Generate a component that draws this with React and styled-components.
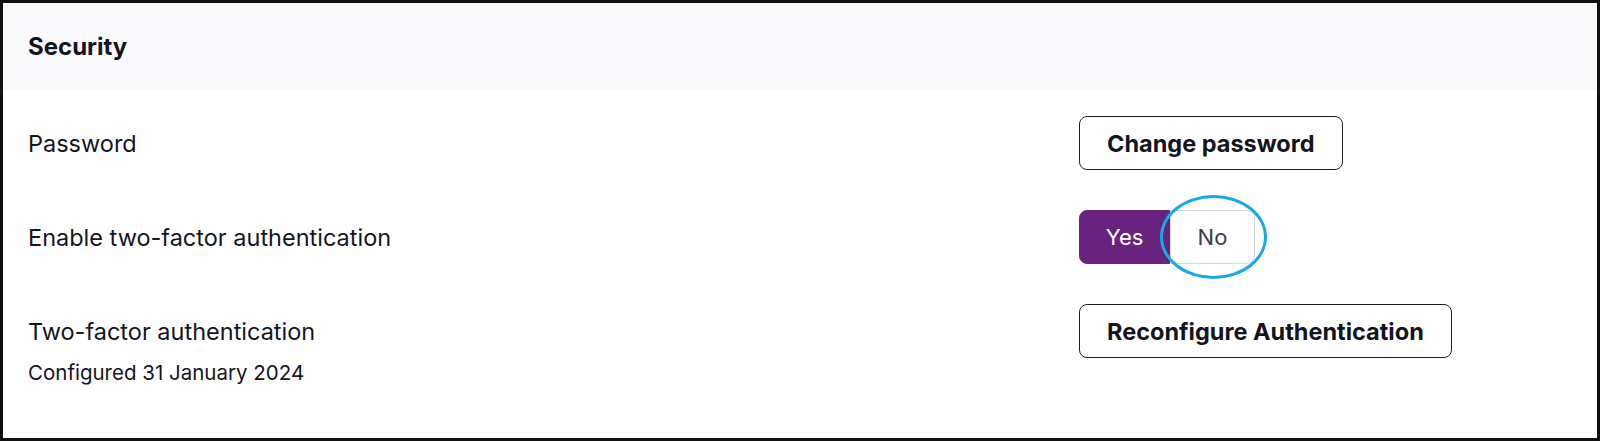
import React, { useState } from "react";
import styled, { createGlobalStyle } from "styled-components";

const Global = createGlobalStyle`
  html, body {
    margin: 0;
    padding: 0;
    background: #fff;
  }
  body {
    font-family: "Inter", "Liberation Sans", sans-serif;
    color: #14141f;
  }
`;

const Panel = styled.section`
  box-sizing: border-box;
  width: 1600px;
  height: 441px;
  border: 3px solid #111;
  background: #fff;
`;

const Header = styled.header`
  height: 87px;
  display: flex;
  align-items: center;
  padding-left: 25px;
  background: #f9f9fb;
`;

const Title = styled.h2`
  margin: 0;
  font-size: 24px;
  font-weight: 700;
`;

const Rows = styled.div`
  display: grid;
  grid-template-columns: 1051px 1fr;
  row-gap: 40px;
  padding: 26px 0 0 25px;
`;

const Label = styled.div`
  display: flex;
  flex-direction: column;
`;

const LabelText = styled.span`
  height: 54px;
  display: flex;
  align-items: center;
  font-size: 23.5px;
`;

const SubText = styled.span`
  margin-top: 3px;
  font-size: 20.5px;
  line-height: 24px;
`;

const Control = styled.div`
  display: flex;
  align-items: flex-start;
`;

const OutlineButton = styled.button`
  box-sizing: border-box;
  height: 54px;
  padding: 0 27px;
  border: 1px solid #1e1e2a;
  border-radius: 8px;
  background: #fff;
  font-family: inherit;
  font-size: 23.5px;
  font-weight: 700;
  color: #14141f;
  cursor: pointer;
`;

const Toggle = styled.div`
  position: relative;
  display: flex;
  height: 54px;
`;

const ToggleOption = styled.button`
  box-sizing: border-box;
  width: ${(p) => p.$w}px;
  height: 54px;
  padding: 0;
  font-family: inherit;
  font-size: 22px;
  cursor: pointer;
  border: 1px solid ${(p) => (p.$active ? "#68237f" : "#d3d6dd")};
  background: ${(p) => (p.$active ? "#68237f" : "#fff")};
  color: ${(p) => (p.$active ? "#fff" : "#3a3d47")};
  border-radius: ${(p) => (p.$first ? "8px 0 0 8px" : "0 8px 8px 0")};
`;

const Highlight = styled.div`
  position: absolute;
  left: 81px;
  top: -15px;
  width: 107px;
  height: 84px;
  box-sizing: border-box;
  border: 3px solid #17abe6;
  border-radius: 50%;
  pointer-events: none;
`;

export default function App() {
  const [twoFactor, setTwoFactor] = useState(true);

  return (
    <>
      <Global />
      <Panel>
        <Header>
          <Title>Security</Title>
        </Header>
        <Rows>
          <Label>
            <LabelText>Password</LabelText>
          </Label>
          <Control>
            <OutlineButton>Change password</OutlineButton>
          </Control>

          <Label>
            <LabelText>Enable two-factor authentication</LabelText>
          </Label>
          <Control>
            <Toggle>
              <ToggleOption $first $w={91} $active={twoFactor} onClick={() => setTwoFactor(true)}>
                Yes
              </ToggleOption>
              <ToggleOption $w={85} $active={!twoFactor} onClick={() => setTwoFactor(false)}>
                No
              </ToggleOption>
              <Highlight />
            </Toggle>
          </Control>

          <Label>
            <LabelText>Two-factor authentication</LabelText>
            <SubText>Configured 31 January 2024</SubText>
          </Label>
          <Control>
            <OutlineButton>Reconfigure Authentication</OutlineButton>
          </Control>
        </Rows>
      </Panel>
    </>
  );
}
